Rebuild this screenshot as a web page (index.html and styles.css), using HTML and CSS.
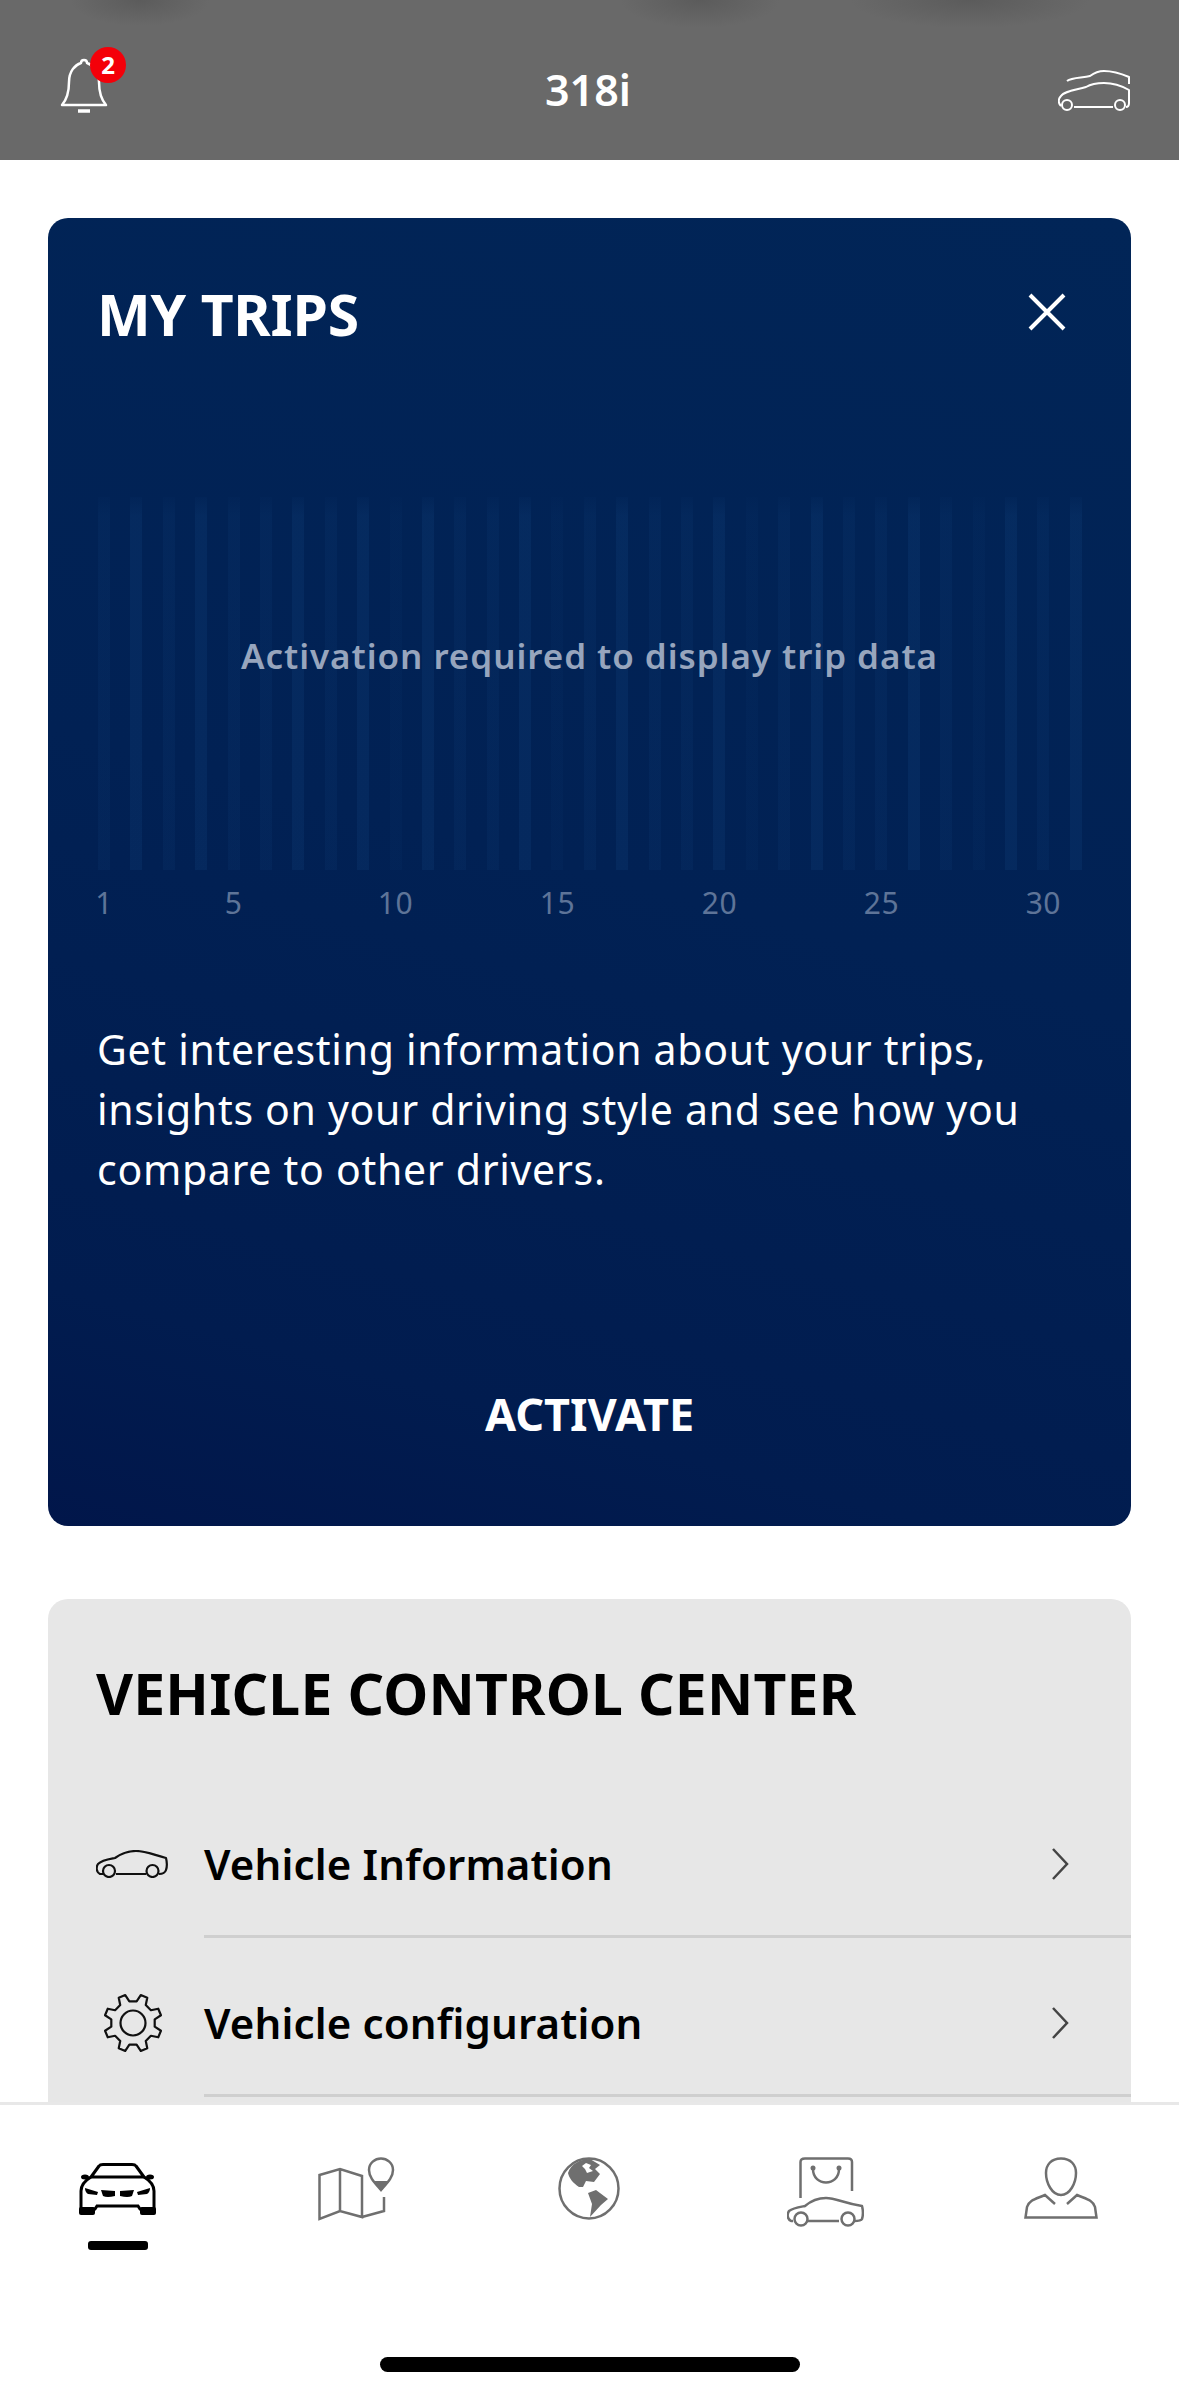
FILE: index.html
```html
<!DOCTYPE html>
<html lang="en">
	<head>
		<meta charset="UTF-8" />
		<meta name="viewport" content="width=device-width, initial-scale=1.0" />
		<title>318i</title>
		<link rel="stylesheet" href="styles.css">
	</head>
	<body>
		<div class="app">
			<header class="top-bar">
				<div class="bell">
					<svg class="bell-icon" viewBox="0 0 48 56" fill="none" stroke="currentColor" stroke-width="2.5">
						<path d="M2 47 C8 40 9 32 9 24 C9 13 15 7 21 5 C21 1 27 1 27 5 C33 7 39 13 39 24 C39 32 40 40 46 47 Z" stroke-linejoin="round" />
						<path d="M18 53 H30" stroke-width="3.5" />
					</svg>
					<span class="badge">2</span>
				</div>
				<div class="top-title">318i</div>
				<svg class="cars-icon" viewBox="0 0 73 41" fill="none" stroke="currentColor" stroke-width="2">
					<path d="M9 11 C14 7 24 8 32 6 C36 3 40 1 46 1 C54 1 64 4 71 7 V14" stroke-linejoin="round" />
					<path d="M3 36 C0 33 0 29 3 26 C6 21 18 20 28 17 C33 14 38 13 46 13 C54 13 64 16 71 20 V33 C71 36 70 37 68 37 M55 37 H16" stroke-linejoin="round" />
					<circle cx="9" cy="35" r="5" />
					<circle cx="62" cy="35" r="5" />
				</svg>
			</header>

			<main class="content">
				<section class="card trips-card">
					<div class="card-head">
						<h2 class="card-title">MY TRIPS</h2>
						<svg class="close-icon" viewBox="0 0 38 38" fill="none" stroke="currentColor" stroke-width="4">
							<path d="M2 2 L36 36 M36 2 L2 36" />
						</svg>
					</div>

					<div class="chart">
						<div class="bars">
							<i></i><i class="lit"></i><i></i><i class="lit"></i><i></i><i></i><i class="lit"></i><i></i>
							<i class="lit"></i><i class="dim"></i><i class="lit"></i><i></i><i></i><i class="lit"></i><i class="dim"></i><i></i>
							<i class="lit"></i><i></i><i></i><i class="lit"></i><i class="dim"></i><i></i><i class="lit"></i><i></i>
							<i></i><i class="lit"></i><i></i><i class="dim"></i><i class="lit"></i><i></i><i class="lit"></i>
						</div>
						<p class="chart-note">Activation required to display trip data</p>
					</div>
					<div class="axis">
						<span class="day-1">1</span>
						<span class="day-5">5</span>
						<span class="day-10">10</span>
						<span class="day-15">15</span>
						<span class="day-20">20</span>
						<span class="day-25">25</span>
						<span class="day-30">30</span>
					</div>

					<p class="trips-text">Get interesting information about your trips, insights on your driving style and see how you compare to other drivers.</p>
					<div class="activate">ACTIVATE</div>
				</section>

				<section class="card control-card">
					<h2 class="card-title">VEHICLE CONTROL CENTER</h2>
					<div class="row">
						<svg class="row-icon car-side" viewBox="0 0 72 28" fill="none" stroke="currentColor" stroke-width="2.2">
							<path d="M7 24 H4 C0 22 0 17 2 14 C6 10 14 9 19 8 C26 3 32 1 40 1 C50 1 58 5 70 8 C71 12 71 17 70 20 C69 23 66 24 63 24 M50 24 H20" stroke-linejoin="round" />
							<circle cx="13" cy="21" r="6" />
							<circle cx="56.500" cy="21" r="6" />
						</svg>
						<span class="row-label">Vehicle Information</span>
						<svg class="chevron" viewBox="0 0 18 34" fill="none" stroke="currentColor" stroke-width="2.5">
							<path d="M2 2 L16 17 L2 32" />
						</svg>
					</div>
					<div class="row">
						<svg class="row-icon gear" viewBox="-31 -31 62 62" fill="none" stroke="currentColor" stroke-width="2.2">
							<polygon stroke-linejoin="round" points="3.63,-21.7 7.75,-27.95 14.28,-25.24 12.77,-17.91 17.91,-12.77 25.24,-14.28 27.95,-7.75 21.7,-3.63 21.7,3.63 27.95,7.75 25.24,14.28 17.91,12.77 12.77,17.91 14.28,25.24 7.75,27.95 3.63,21.7 -3.63,21.7 -7.75,27.95 -14.28,25.24 -12.77,17.91 -17.91,12.77 -25.24,14.28 -27.95,7.75 -21.7,3.63 -21.7,-3.63 -27.95,-7.75 -25.24,-14.28 -17.91,-12.77 -12.77,-17.91 -14.28,-25.24 -7.75,-27.95 -3.63,-21.7" />
							<circle r="12.5" />
						</svg>
						<span class="row-label">Vehicle configuration</span>
						<svg class="chevron" viewBox="0 0 18 34" fill="none" stroke="currentColor" stroke-width="2.5">
							<path d="M2 2 L16 17 L2 32" />
						</svg>
					</div>
				</section>
			</main>

			<nav class="tab-bar">
				<div class="tabs">
					<div class="tab active">
						<svg class="tab-car" viewBox="0 0 77 52" fill="none" stroke="currentColor" stroke-width="3">
							<path d="M12 14 L20 3 Q21 1.500 24 1.500 H53 Q56 1.500 57 3 L65 14 Z" stroke-linejoin="round" />
							<path d="M12 14 Q2 20 2 28 V46 H16 L18 43 H59 L61 46 H75 V28 Q75 20 65 14" />
							<g fill="currentColor" stroke="none">
								<rect x="0" y="44" width="16" height="8" rx="2" />
								<rect x="61" y="44" width="16" height="8" rx="2" />
								<ellipse cx="6" cy="14" rx="4" ry="2.500" />
								<ellipse cx="71" cy="14" rx="4" ry="2.500" />
								<path d="M6 25 L19 29 L18 32 L9 31 Q6 29 6 25 Z" />
								<path d="M71 25 L58 29 L59 32 L68 31 Q71 29 71 25 Z" />
								<path d="M22 27 L36 28 V33 Q28 35 24 33 Z" />
								<path d="M55 27 L41 28 V33 Q49 35 53 33 Z" />
							</g>
						</svg>
						<span class="tab-mark"></span>
					</div>
					<div class="tab">
						<svg class="tab-map" viewBox="0 0 77 65" fill="none" stroke="currentColor" stroke-width="2.5">
							<path d="M1.500 18 L22 12 L44 19 V60 L22 54 L1.500 62 Z M22 12 V54 M44 60 L66 54 V40" />
							<path d="M63 33 C56 25 51 20 51 13 C51 6 57 1.500 63 1.500 C69 1.500 75 6 75 13 C75 20 70 25 63 33 Z" />
							<path d="M55 24 H71 L63 34 Z" fill="currentColor" stroke="none" />
						</svg>
					</div>
					<div class="tab">
						<svg class="tab-globe" viewBox="0 0 62 63" fill="none" stroke="currentColor" stroke-width="2.500">
							<ellipse cx="31" cy="31.500" rx="29.500" ry="30" />
							<path fill="currentColor" stroke="none" d="M10 16 C13 7 22 2 32 2 L42 8 L37 12 L42 17 L36 25 L28 24 L25 30 L21 30 C15 26 11 21 10 16 Z" />
							<path fill="currentColor" stroke="none" d="M30 36 L38 33 L50 42 L43 48 L32 60 L34 47 Z" />
							<path fill="#fff" stroke="none" d="M24 9 L28 6 L33 8 L31 11 L35 14 L29 16 L27 12 Z" />
						</svg>
					</div>
					<div class="tab">
						<svg class="tab-bag" viewBox="0 0 77 71" fill="none" stroke="currentColor" stroke-width="2.500">
							<path d="M13.500 41 V5 Q13.500 1.500 18 1.500 H61 Q65 1.500 65 5 V34" />
							<path d="M26 12 C26 30 52 30 52 12" />
							<circle cx="26" cy="11" r="2.500" fill="currentColor" stroke="none" />
							<circle cx="52" cy="11" r="2.500" fill="currentColor" stroke="none" />
							<path d="M6 64 H4 C0 62 0 57 2 54 C6 51 13 50 18 49 C25 43 31 41 39 41 C49 41 56 46 75 49 C76 53 76 59 75 62 C74 64 70 64 67 64 M52 64 H20" stroke-linejoin="round" />
							<circle cx="14" cy="62" r="6.500" />
							<circle cx="61" cy="62" r="6.500" />
						</svg>
					</div>
					<div class="tab">
						<svg class="tab-person" viewBox="0 0 74 62" fill="none" stroke="currentColor" stroke-width="2.500">
							<path d="M37 1.500 C27 1.500 22 8 22 16 C22 26 28 38 37 38 C46 38 52 26 52 16 C52 8 47 1.500 37 1.500 Z" />
							<path d="M31 47 L21 38 C12 42 5 43 3 50 L1.500 60.500 H72.500 L71 50 C69 43 62 42 53 38 L43 47" />
						</svg>
					</div>
				</div>
				<div class="home-bar"></div>
			</nav>
		</div>
	</body>
</html>
```

FILE: styles.css
```css
* {
	box-sizing: border-box;
}
body {
	margin: 0;
	font-family: "Noto Sans", "Open Sans", sans-serif;
	background-color: white;
}
.app {
	display: flex;
	flex-direction: column;
	height: 2396px;
	overflow: hidden;
}
svg {
	display: block;
}

/* top bar */
.top-bar {
	height: 160px;
	flex: none;
	display: flex;
	align-items: flex-start;
	justify-content: space-between;
	padding: 47px 48px 0 60px;
	color: white;
	background:
		radial-gradient(ellipse 70px 26px at 140px 0, rgba(80, 80, 80, 0.55), transparent),
		radial-gradient(ellipse 80px 28px at 700px 0, rgba(80, 80, 80, 0.55), transparent),
		radial-gradient(ellipse 120px 28px at 970px 0, rgba(80, 80, 80, 0.55), transparent),
		#696969;
}
.bell {
	position: relative;
	width: 48px;
	padding-top: 11px;
}
.bell-icon {
	width: 48px;
	height: 56px;
}
.badge {
	position: absolute;
	left: 30px;
	top: 0;
	width: 36px;
	height: 36px;
	border-radius: 50%;
	background-color: #f40009;
	font-size: 24px;
	font-weight: 700;
	line-height: 36px;
	text-align: center;
}
.top-title {
	font-size: 43px;
	font-weight: 600;
	line-height: 50px;
	margin-top: 18px;
	margin-left: 10px;
}
.cars-icon {
	width: 73px;
	height: 41px;
	margin-top: 23px;
}

/* cards */
.content {
	flex: 1;
	min-height: 0;
	overflow: hidden;
	padding: 58px 48px 0;
}
.card {
	border-radius: 20px;
}
.card-title {
	margin: 0;
	font-size: 57px;
	font-weight: 700;
	line-height: 70px;
	letter-spacing: -0.2px;
}
.trips-card {
	height: 1308px;
	padding: 61px 49px 0;
	color: white;
	background: linear-gradient(195deg, #012557 0%, #012154 50%, #011c4f 85%, #01164a 100%);
}
.card-head {
	display: flex;
	align-items: center;
	justify-content: space-between;
}
.close-icon {
	width: 38px;
	height: 38px;
	margin-right: 16px;
	margin-top: -4px;
}

/* chart */
.chart {
	position: relative;
	height: 373px;
	margin-top: 148px;
}
.bars {
	display: grid;
	grid-template-columns: repeat(31, 12px);
	column-gap: 20.4px;
	height: 100%;
	margin-left: 1px;
}
.bars i {
	background: linear-gradient(rgba(20, 70, 130, 0.04), rgba(20, 70, 130, 0.14) 5%);
}
.bars .lit {
	background: linear-gradient(rgba(20, 70, 130, 0.06), rgba(20, 70, 130, 0.22) 5%);
}
.bars .dim {
	background: linear-gradient(rgba(20, 70, 130, 0.02), rgba(20, 70, 130, 0.08) 5%);
}
.chart-note {
	position: absolute;
	left: 0;
	right: 0;
	top: 136px;
	margin: 0;
	font-size: 35px;
	font-weight: 600;
	line-height: 46px;
	letter-spacing: 0.95px;
	text-align: center;
	color: #97a5bd;
}
.axis {
	display: grid;
	grid-template-columns: repeat(31, 12px);
	column-gap: 20.4px;
	margin-top: 13px;
	margin-left: 1px;
	font-size: 30px;
	line-height: 40px;
	letter-spacing: 0.5px;
	color: #5e7498;
}
.axis span {
	justify-self: center;
}
.day-1 { grid-column: 1; }
.day-5 { grid-column: 5; }
.day-10 { grid-column: 10; }
.day-15 { grid-column: 15; }
.day-20 { grid-column: 20; }
.day-25 { grid-column: 25; }
.day-30 { grid-column: 30; }

.trips-text {
	margin: 96px 0 0;
	font-size: 41px;
	line-height: 60px;
	letter-spacing: 0.7px;
}
.activate {
	margin-top: 185px;
	font-size: 45px;
	font-weight: 700;
	line-height: 60px;
	text-align: center;
}

/* control center */
.control-card {
	margin-top: 73px;
	height: 700px;
	padding-top: 59px;
	color: black;
	background-color: #e7e7e7;
}
.control-card .card-title {
	margin-left: 48px;
	margin-bottom: 51px;
	letter-spacing: 0.2px;
}
.row {
	display: flex;
	align-items: center;
	height: 159px;
	position: relative;
	padding-left: 156px;
	padding-top: 10px;
}
.row::after {
	content: "";
	position: absolute;
	left: 156px;
	right: 0;
	bottom: 0;
	height: 3px;
	background-color: #cfcfcf;
}
.row-icon {
	position: absolute;
	color: #111;
}
.car-side {
	left: 48px;
	width: 72px;
	height: 28px;
}
.gear {
	left: 54px;
	width: 62px;
	height: 62px;
}
.row-label {
	font-size: 42px;
	font-weight: 600;
	letter-spacing: 0.15px;
}
.chevron {
	position: absolute;
	right: 62px;
	width: 18px;
	height: 34px;
	color: #444;
}

/* bottom tabs */
.tab-bar {
	flex: none;
	height: 294px;
	border-top: 3px solid #e8e8e8;
	background-color: white;
	position: relative;
}
.tabs {
	display: grid;
	grid-template-columns: repeat(5, 1fr);
	height: 252px;
	padding-top: 52px;
}
.tab {
	display: flex;
	flex-direction: column;
	align-items: center;
	color: #6f6f6f;
}
.tab.active {
	color: black;
	padding-top: 6px;
}
.tab-car {
	width: 77px;
	height: 52px;
}
.tab-mark {
	width: 60px;
	height: 9px;
	margin-top: 26px;
	border-radius: 3px;
	background-color: black;
}
.tab-map {
	width: 77px;
	height: 65px;
	margin-left: 6px;
}
.tab-globe {
	width: 62px;
	height: 63px;
}
.tab-bag {
	width: 77px;
	height: 71px;
}
.tab-person {
	width: 74px;
	height: 62px;
}
.home-bar {
	width: 420px;
	height: 15px;
	margin: 0 auto;
	border-radius: 8px;
	background-color: black;
}
```
